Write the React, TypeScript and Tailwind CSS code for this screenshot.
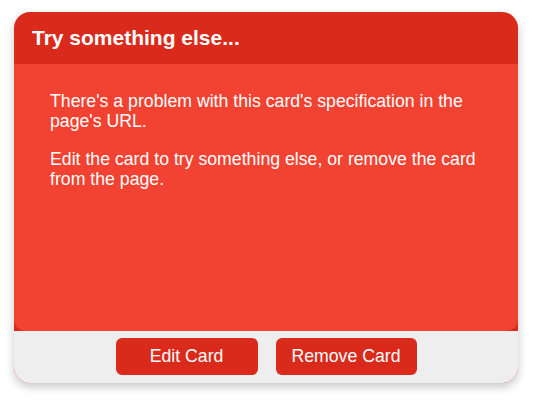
export default function App() {
  return (
    <div className="min-h-[400px] w-[534px] bg-white pl-[14px] pt-[12px] font-['Liberation_Sans',Arial,sans-serif]">
      <div className="flex h-[371px] w-[504px] flex-col overflow-hidden rounded-2xl bg-[#d92a1c] shadow-[0_4px_10px_rgba(0,0,0,0.22)]">
        <div className="flex h-[52px] shrink-0 items-center px-[18px]">
          <h2 className="text-[21px] font-bold leading-[24px] text-white">Try something else...</h2>
        </div>
        <div className="flex-1 rounded-b-xl bg-[#f24232] pl-9 pr-7 pt-[27px] text-[17.7px] leading-[20px] text-white">
          <p>There's a problem with this card's specification in the page's URL.</p>
          <p className="mt-[18px]">Edit the card to try something else, or remove the card from the page.</p>
        </div>
        <div className="flex h-[52px] shrink-0 items-center justify-center gap-[18px] bg-[#eeeeee] pb-px">
          <button type="button" className="h-[37px] w-[142px] rounded-md bg-[#d92a1c] text-[17.7px] text-white">
            Edit Card
          </button>
          <button type="button" className="h-[37px] w-[141px] rounded-md bg-[#d92a1c] text-[17.7px] text-white">
            Remove Card
          </button>
        </div>
      </div>
    </div>
  );
}
